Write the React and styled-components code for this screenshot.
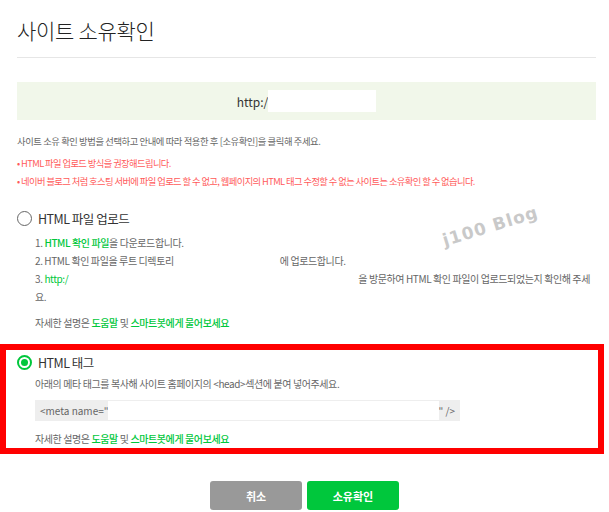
import React from "react";
import styled, { createGlobalStyle } from "styled-components";

const Global = createGlobalStyle`
  html, body { margin: 0; padding: 0; background: #fff; }
  body { font-family: "Noto Sans CJK KR", "Noto Sans", sans-serif; color: #666; font-feature-settings: "palt"; }
  * { box-sizing: border-box; }
`;

const Page = styled.div`
  width: 609px;
  padding: 15px 13px 0 17px;
  position: relative;
`;

const Title = styled.h1`
  margin: 0;
  font-size: 21px;
  line-height: 30px;
  font-weight: 300;
  color: #222;
  letter-spacing: -0.3px;
`;

const Divider = styled.hr`
  margin: 12px 0 0;
  border: 0;
  border-top: 1px solid #e6e6e6;
`;

const UrlBox = styled.div`
  margin-top: 24px;
  height: 38px;
  background: #f1f7ea;
  display: flex;
  align-items: center;
  justify-content: center;
  font-size: 12px;
  color: #333;
`;

const Blank = styled.span`
  display: inline-block;
  vertical-align: middle;
  background: #fff;
  width: ${(p) => p.$w}px;
  height: ${(p) => p.$h || 14}px;
`;

const Intro = styled.p`
  margin: 12px 0 0;
  font-size: 9.3px;
  line-height: 18px;
  color: #666;
  letter-spacing: -0.4px;
`;

const Notes = styled.ul`
  margin: 4px 0 0;
  padding: 0;
  list-style: none;
`;

const Note = styled.li`
  font-size: 9.3px;
  line-height: 18px;
  color: #ff5a5a;
  letter-spacing: -0.6px;
  &::before { content: "• "; }
`;

const Section = styled.section`
  margin-top: ${(p) => p.$mt || 0}px;
  ${(p) =>
    p.$highlight &&
    `
    margin-left: -17px;
    margin-right: -8px;
    border: 6px solid #ff0000;
    padding: 2px 0 0 11px;
  `}
`;

const Header = styled.label`
  display: flex;
  align-items: center;
  gap: 6px;
  height: 20px;
  font-size: 12.5px;
  color: #333;
  letter-spacing: -0.5px;
`;

const Radio = styled.span`
  width: 15px;
  height: 15px;
  border-radius: 50%;
  border: ${(p) => (p.$checked ? "2px solid #00c73c" : "1.5px solid #666")};
  display: flex;
  align-items: center;
  justify-content: center;
  &::after {
    content: "";
    width: 7px;
    height: 7px;
    border-radius: 50%;
    background: ${(p) => (p.$checked ? "#00c73c" : "transparent")};
  }
`;

const Body = styled.div`
  padding-left: 18px;
  margin-top: ${(p) => p.$mt || 0}px;
`;

const Steps = styled.ol`
  margin: 0;
  padding: 0;
  list-style: none;
  padding-right: 2px;
`;

const Line = styled.li`
  font-size: 10px;
  line-height: 18px;
  color: #666;
  letter-spacing: -0.4px;
`;

const Text = styled.p`
  margin: ${(p) => p.$mt || 0}px 0 0;
  font-size: 10px;
  line-height: 18px;
  color: #666;
  letter-spacing: -0.4px;
`;

const Green = styled.span`
  color: #00c73c;
  font-weight: ${(p) => (p.$bold ? 500 : 400)};
`;

const Gap = styled.span`
  display: inline-block;
  width: ${(p) => p.$w}px;
`;

const MetaBox = styled.div`
  margin-top: 7px;
  width: 425px;
  height: 21px;
  background: #eee;
  display: flex;
  align-items: center;
  padding: 0 5px;
  font-size: 10px;
  color: #666;
  white-space: nowrap;
`;

const Buttons = styled.div`
  margin-top: 27px;
  display: flex;
  justify-content: center;
  gap: 5px;
  padding-right: 4px;
`;

const Button = styled.button`
  width: 92px;
  height: 29px;
  border: 0;
  border-radius: 3px;
  background: ${(p) => (p.$primary ? "#00c73c" : "#999")};
  color: #fff;
  font-family: inherit;
  font-size: 11px;
  font-weight: 700;
`;

const Watermark = styled.div`
  position: absolute;
  left: 446px;
  top: 230px;
  font-family: "DejaVu Sans", sans-serif;
  font-weight: 700;
  font-size: 17px;
  color: #c9c9c9;
  transform: rotate(-17deg);
  transform-origin: left bottom;
  letter-spacing: 1px;
  pointer-events: none;
`;

export default function App() {
  return (
    <>
      <Global />
      <Page>
        <Title>사이트 소유확인</Title>
        <Divider />
        <UrlBox>
          http:/<Blank $w={108} $h={22} />
        </UrlBox>
        <Intro>사이트 소유 확인 방법을 선택하고 안내에 따라 적용한 후 [소유확인]을 클릭해 주세요.</Intro>
        <Notes>
          <Note>HTML 파일 업로드 방식을 권장해드립니다.</Note>
          <Note>네이버 블로그 처럼 호스팅 서버에 파일 업로드 할 수 없고, 웹페이지의 HTML 태그 수정할 수 없는 사이트는 소유확인 할 수 없습니다.</Note>
        </Notes>

        <Section $mt={18}>
          <Header>
            <Radio />
            HTML 파일 업로드
          </Header>
          <Body $mt={6}>
            <Steps>
              <Line>
                1. <Green $bold>HTML 확인 파일</Green>을 다운로드합니다.
              </Line>
              <Line>
                2. HTML 확인 파일을 루트 디렉토리<Gap $w={106} />에 업로드합니다.
              </Line>
              <Line>
                3. <Green>http:/</Green>
                <Gap $w={290} />을 방문하여 HTML 확인 파일이 업로드되었는지 확인해 주세요.
              </Line>
            </Steps>
            <Text $mt={8}>
              자세한 설명은 <Green $bold>도움말</Green> 및 <Green $bold>스마트봇에게 물어보세요</Green>
            </Text>
          </Body>
        </Section>

        <Section $mt={12} $highlight>
          <Header>
            <Radio $checked />
            HTML 태그
          </Header>
          <Body $mt={3}>
            <Text>아래의 메타 태그를 복사해 사이트 홈페이지의 &lt;head&gt;섹션에 붙여 넣어주세요.</Text>
            <MetaBox>
              &lt;meta name="<Blank $w={345} $h={19} />" /&gt;
            </MetaBox>
            <Text $mt={9}>
              자세한 설명은 <Green $bold>도움말</Green> 및 <Green $bold>스마트봇에게 물어보세요</Green>
            </Text>
          </Body>
        </Section>

        <Buttons>
          <Button>취소</Button>
          <Button $primary>소유확인</Button>
        </Buttons>

        <Watermark>j100 Blog</Watermark>
      </Page>
    </>
  );
}
